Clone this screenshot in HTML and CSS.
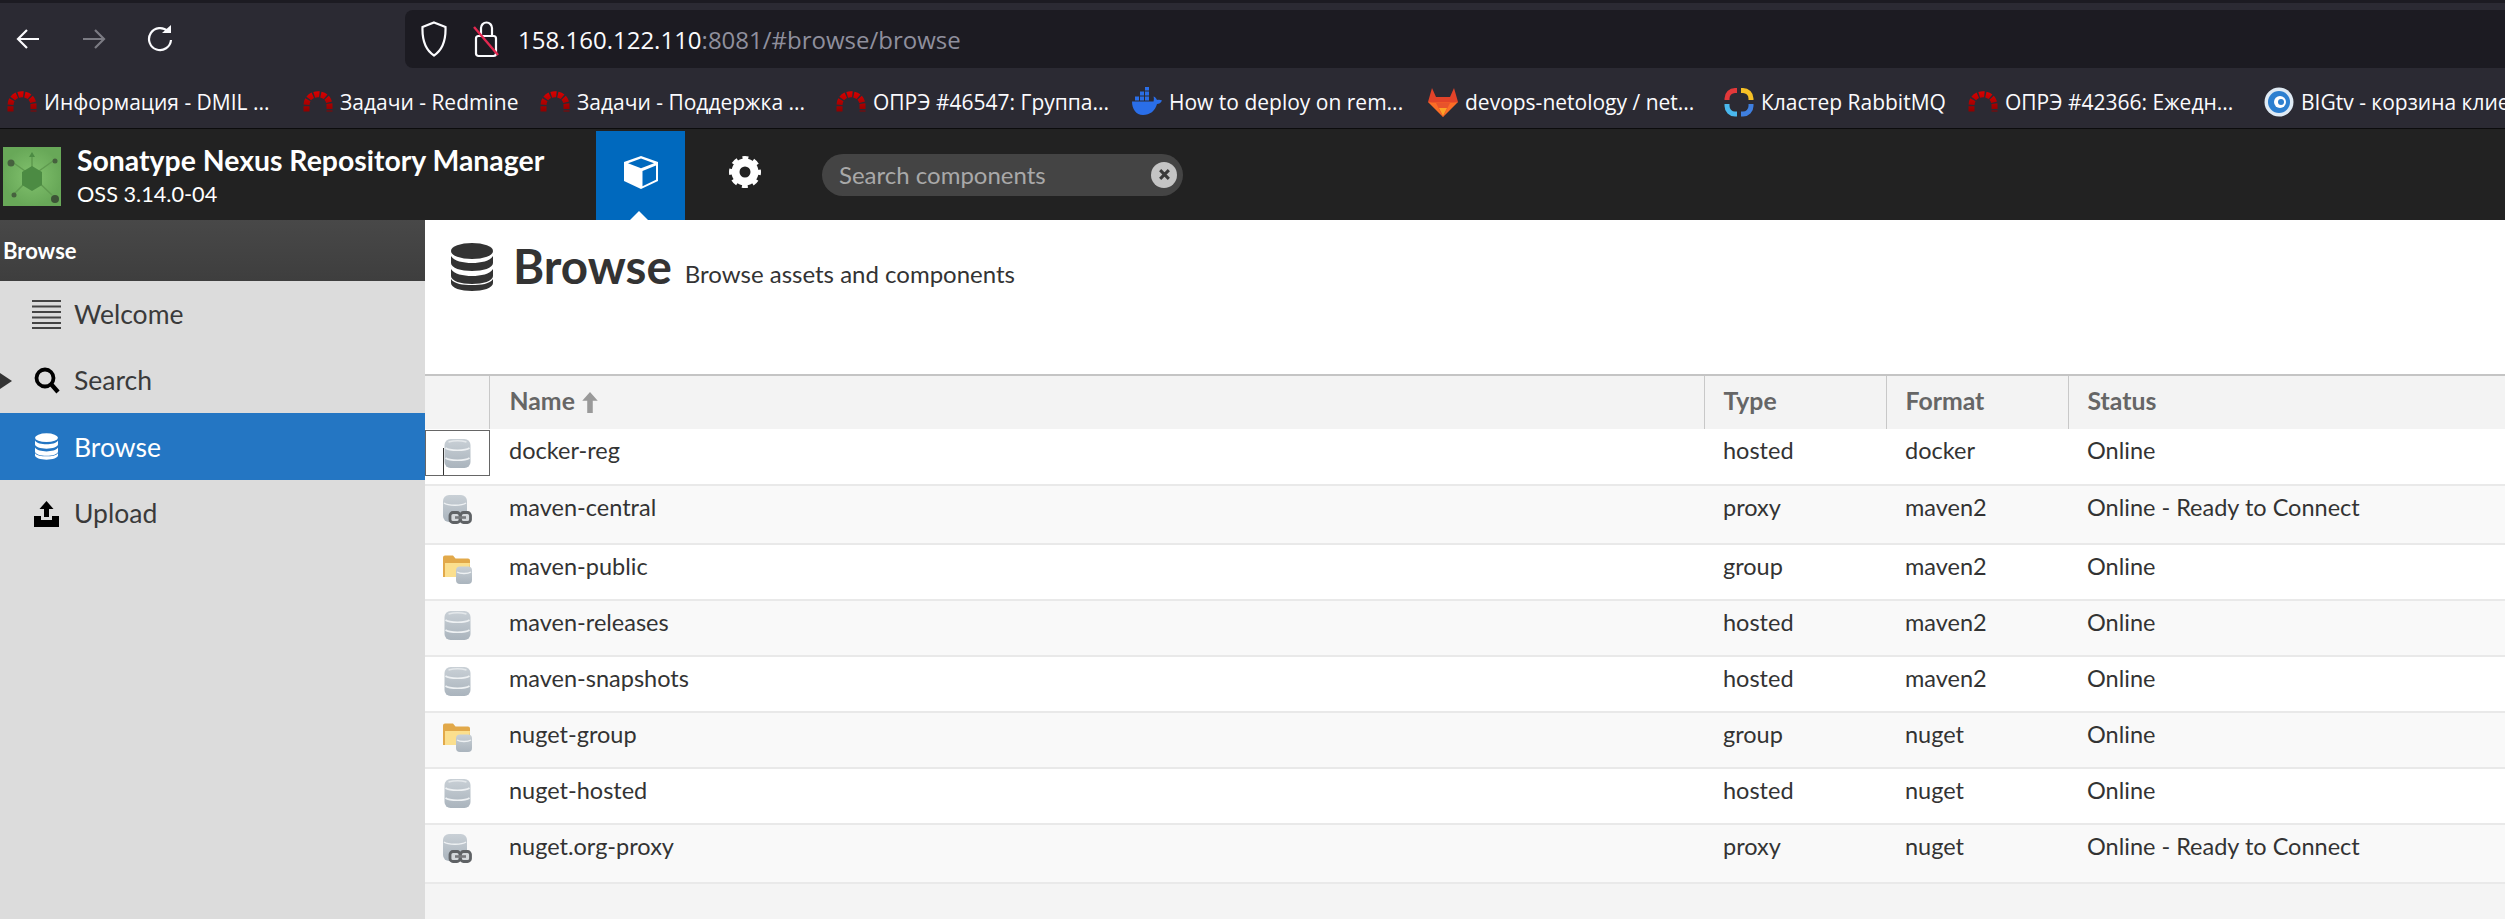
FILE: index.html
```html
<!DOCTYPE html>
<html lang="en">
<head>
  <meta charset="UTF-8">
  <meta name="viewport" content="width=device-width, initial-scale=1.0">
  <title>Browse - Nexus Repository Manager</title>
  <link rel="stylesheet" href="styles.css">
</head>
<body>

  <svg class="sprites" width="0" height="0">
    <defs>
      <linearGradient id="db-fill" x1="0" y1="0" x2="0" y2="1">
        <stop offset="0" stop-color="#c9d0d6"/>
        <stop offset="1" stop-color="#aab4bd"/>
      </linearGradient>
      <linearGradient id="redmine-fill" gradientUnits="userSpaceOnUse" x1="0" y1="6" x2="0" y2="28">
        <stop offset="0" stop-color="#e00000"/>
        <stop offset="1" stop-color="#8e0000"/>
      </linearGradient>
      <radialGradient id="logo-fill">
        <stop offset="0" stop-color="#82c26e"/>
        <stop offset="1" stop-color="#68a858"/>
      </radialGradient>
      <symbol id="redmine" viewBox="0 3.5 30 30">
        <path d="M3.500 28V22C3.500 7 26.500 7 26.500 22V28" fill="none" stroke="url(#redmine-fill)" stroke-width="6" stroke-dasharray="5.200 1.500"/>
      </symbol>
      <symbol id="stack" viewBox="0 0 42 48">
        <ellipse cx="21" cy="8" rx="21" ry="8" fill="currentColor"/>
        <path d="M0 13c3 5 12 7 21 7s18-2 21-7v7c0 5-10 8-21 8S0 25 0 20z" fill="currentColor"/>
        <path d="M0 26c3 5 12 7 21 7s18-2 21-7v7c0 5-10 8-21 8S0 38 0 33z" fill="currentColor"/>
        <path d="M0 36c3 5 12 6 21 6s18-1 21-6v4c0 5-10 8-21 8S0 45 0 40z" fill="currentColor"/>
      </symbol>
      <symbol id="repo-hosted" viewBox="0 0 26 29">
        <rect x="0" y="0" width="26" height="29" rx="6" fill="url(#db-fill)"/>
        <path d="M1 9c4 3 20 3 24 0M1 19c4 3 20 3 24 0" fill="none" stroke="#eef1f3" stroke-width="1.6"/>
        <path d="M4 3c5-1.500 13-1.500 18 0" fill="none" stroke="#e4e8eb" stroke-width="1.500"/>
      </symbol>
      <symbol id="repo-proxy" viewBox="0 0 29 29">
        <rect x="0" y="0" width="24" height="27" rx="6" fill="url(#db-fill)"/>
        <path d="M1 8c4 3 18 3 22 0" fill="none" stroke="#eef1f3" stroke-width="1.500"/>
        <rect x="7" y="17.500" width="10" height="10" rx="3" fill="#d4d8db" stroke="#5f6265" stroke-width="2.800"/>
        <rect x="17.500" y="17.500" width="10" height="10" rx="3" fill="#d4d8db" stroke="#5f6265" stroke-width="2.800"/>
        <path d="M12 22.500h11" stroke="#77797c" stroke-width="2.600"/>
      </symbol>
      <symbol id="repo-group" viewBox="0 0 29 29">
        <path d="M0 2.500a2 2 0 0 1 2-2h8l2.500 3H25a2 2 0 0 1 2 2V22H0z" fill="#e2a94a"/>
        <path d="M2 8h25l-1.500 14H2z" fill="#fbdf8e"/>
        <rect x="13" y="11.500" width="16" height="17.500" rx="4" fill="url(#db-fill)"/>
        <path d="M14 17c3 2 11 2 14 0" fill="none" stroke="#eef1f3" stroke-width="1.400"/>
      </symbol>
    </defs>
  </svg>

  <div class="window-strip"></div>

  <div class="toolbar">
    <div class="nav-buttons">
      <svg class="nav-icon" viewBox="0 0 26 26"><path d="M24 13H3M12 4l-9 9 9 9" fill="none" stroke="#fbfbfe" stroke-width="2.200"/></svg>
      <svg class="nav-icon" viewBox="0 0 26 26"><path d="M2 13h21M14 4l9 9-9 9" fill="none" stroke="#7b7b83" stroke-width="2.200"/></svg>
      <svg class="nav-icon" viewBox="0 0 26 30"><path d="M21 7.500A11 11 0 1 0 24 16" fill="none" stroke="#fbfbfe" stroke-width="2.200"/><path d="M15 9h9V1z" fill="#fbfbfe"/></svg>
    </div>
    <div class="url-bar">
      <svg class="shield" viewBox="0 0 26 36"><path d="M13 1.500 24.500 6c.5 14-3 23-11.500 28.500C4.500 29 1 20 1.500 6z" fill="none" stroke="#fbfbfe" stroke-width="2.200"/></svg>
      <svg class="lock" viewBox="0 0 26 38">
        <path d="M8 16V8a5.500 5.500 0 0 1 11 0v8" fill="none" stroke="#fbfbfe" stroke-width="2.200"/>
        <rect x="3" y="16" width="20" height="20" rx="2.500" fill="none" stroke="#fbfbfe" stroke-width="2.200"/>
        <path d="M1 7l24 28" stroke="#e22850" stroke-width="2.400"/>
      </svg>
      <span class="url-text">158.160.122.110<span class="url-rest">:8081/#browse/browse</span></span>
    </div>
  </div>

  <div class="bookmarks">
    <a class="bookmark"><svg class="favicon"><use href="#redmine"/></svg>Информация - DMIL ...</a>
    <a class="bookmark bookmark-mid"><svg class="favicon"><use href="#redmine"/></svg>Задачи - Redmine</a>
    <a class="bookmark"><svg class="favicon"><use href="#redmine"/></svg>Задачи - Поддержка ...</a>
    <a class="bookmark"><svg class="favicon"><use href="#redmine"/></svg>ОПРЭ #46547: Группа...</a>
    <a class="bookmark">
      <svg class="favicon" viewBox="0 0 30 30">
        <path d="M0 14.500h21.500c.5-2 .5-3.500 0-5 2 .5 3 2 3.500 3.500 1.500-.5 3.500-.5 5 .5-1 2.500-3 3.500-5 3.500C23 24 18 28 11 28 4 28 0 22 0 14.500z" fill="#2a6ee8"/>
        <path d="M3 9.500h4v4H3zM8 9.500h4v4H8zM13 9.500h4v4h-4zM8 4.500h4v4H8zM13 4.500h4v4h-4zM13-.5h4v4h-4z" fill="#2a6ee8"/>
      </svg>How to deploy on rem...</a>
    <a class="bookmark">
      <svg class="favicon" viewBox="0 0 30 30">
        <path d="M4 1l4 9h14l4-9 4 14-4 2H4l-4-2z" fill="#e24329"/>
        <path d="M0 15l15 15 15-15-4 .5H4z" fill="#fc6d26"/>
        <path d="M8 16h14l-7 14z" fill="#e8532b"/>
        <path d="M11 21h8l-4 8z" fill="#fca326"/>
      </svg>devops-netology / net...</a>
    <a class="bookmark bookmark-short">
      <svg class="favicon" viewBox="0 0 30 30">
        <path d="M13 3.500H11a8 8 0 0 0-8 8V13" fill="none" stroke="#e2383a" stroke-width="5"/>
        <path d="M17 3.500h2a8 8 0 0 1 8 8V13" fill="none" stroke="#f6c026" stroke-width="5"/>
        <path d="M27 17v2a8 8 0 0 1-8 8h-2" fill="none" stroke="#3f7fe0" stroke-width="5"/>
        <path d="M13 27h-2a8 8 0 0 1-8-8v-2" fill="none" stroke="#4ab8ee" stroke-width="5"/>
      </svg>Кластер RabbitMQ</a>
    <a class="bookmark"><svg class="favicon"><use href="#redmine"/></svg>ОПРЭ #42366: Ежедн...</a>
    <a class="bookmark">
      <svg class="favicon" viewBox="0 0 30 30">
        <circle cx="15" cy="15" r="14.500" fill="#dfeaf4"/>
        <circle cx="15" cy="15" r="11" fill="#2c7fd0"/>
        <circle cx="16" cy="15" r="6" fill="#fff"/>
        <circle cx="17" cy="15" r="3" fill="#2c7fd0"/>
      </svg>BIGtv - корзина клиента</a>
  </div>

  <header class="app-header">
    <div class="brand">
      <svg class="brand-logo" viewBox="0 0 58 59">
        <rect width="58" height="59" fill="url(#logo-fill)"/>
        <path d="M29 29 8 14M29 29l21-15M29 29 11 47M29 29l20 19M29 29V7" stroke="#5f9a4f" stroke-width="1.500"/>
        <path d="M29 19l10 6v13l-10 6-10-6V25z" fill="#4c8b43"/>
        <circle cx="8" cy="16" r="3.500" fill="#46613e"/>
        <circle cx="52" cy="14" r="2.500" fill="#46613e"/>
        <circle cx="11" cy="48" r="2.500" fill="#46613e"/>
        <circle cx="52" cy="52" r="4" fill="#3d5437"/>
        <path d="M29 5l3 5h-6z" fill="#4c8b43"/>
      </svg>
      <div class="brand-text">
        <div class="brand-title">Sonatype Nexus Repository Manager</div>
        <div class="brand-version">OSS 3.14.0-04</div>
      </div>
    </div>
    <nav class="mode-tabs">
      <a class="mode-tab mode-tab-active">
        <svg class="cube" viewBox="0 0 34 33">
          <path d="M17 0 34 6v19l-17 8-17-8V6z" fill="#fff"/>
          <path d="M17 2.600 30 7.200l-13 5-13-5z" fill="#0069be"/>
          <path d="M18.500 15 32 9.500v14.300l-13.500 6.400z" fill="#0069be"/>
        </svg>
      </a>
      <a class="mode-tab mode-tab-gear">
        <svg class="gear" viewBox="0 0 32 32">
          <circle cx="16" cy="16" r="9.500" fill="none" stroke="#fff" stroke-width="8"/>
          <circle cx="16" cy="16" r="13.500" fill="none" stroke="#fff" stroke-width="5" stroke-dasharray="5.600 5" stroke-dashoffset="2.800"/>
        </svg>
      </a>
    </nav>
    <div class="search-box">
      <span class="search-placeholder">Search components</span>
      <span class="search-clear">
        <svg viewBox="0 0 12 12"><path d="M2 2l8 8M10 2l-8 8" stroke="#3a3a3a" stroke-width="2.800"/></svg>
      </span>
    </div>
  </header>

  <div class="main">
    <aside class="sidebar">
      <div class="sidebar-title">Browse</div>
      <a class="nav-item">
        <svg class="nav-item-icon" viewBox="0 0 29 29"><path d="M0 1h29M0 6.500h29M0 12h29M0 17.500h29M0 23h29M0 28h29" stroke="#444" stroke-width="1.800"/></svg>
        Welcome
      </a>
      <a class="nav-item">
        <span class="nav-arrow"></span>
        <svg class="nav-item-icon" viewBox="0 0 29 29"><circle cx="13" cy="12" r="8.500" fill="none" stroke="#000" stroke-width="3.800"/><path d="M19 18l7 8" stroke="#000" stroke-width="4.400"/></svg>
        Search
      </a>
      <a class="nav-item nav-item-active">
        <svg class="nav-item-icon nav-item-stack"><use href="#stack"/></svg>
        Browse
      </a>
      <a class="nav-item">
        <svg class="nav-item-icon" viewBox="0 0 29 29"><path d="M14.500 2l7 8h-4.500v8h-5v-8H7.500zM2 17h7v4h11v-4h7v11H2z" fill="#000"/></svg>
        Upload
      </a>
    </aside>

    <section class="content">
      <div class="page-head">
        <svg class="page-icon"><use href="#stack"/></svg>
        <h1 class="page-title">Browse</h1>
        <span class="page-sub">Browse assets and components</span>
      </div>

      <table class="repo-table">
        <colgroup>
          <col class="col-icon"><col class="col-name"><col class="col-type"><col class="col-format"><col>
        </colgroup>
        <thead>
          <tr>
            <th></th>
            <th class="name-head">Name <span class="sort-arrow">
              <svg viewBox="0 0 16 19"><path d="M8 0l7 8h-4.500v11h-5V8H1z" fill="#999"/></svg>
            </span></th>
            <th>Type</th>
            <th>Format</th>
            <th>Status</th>
          </tr>
        </thead>
        <tbody>
          <tr>
            <td class="icon-cell icon-cell-focus"><svg class="repo-icon"><use href="#repo-hosted"/></svg></td>
            <td class="name-cell">docker-reg</td><td>hosted</td><td>docker</td><td>Online</td>
          </tr>
          <tr class="row-tall">
            <td class="icon-cell"><svg class="repo-icon"><use href="#repo-proxy"/></svg></td>
            <td class="name-cell">maven-central</td><td>proxy</td><td>maven2</td><td>Online - Ready to Connect</td>
          </tr>
          <tr>
            <td class="icon-cell"><svg class="repo-icon"><use href="#repo-group"/></svg></td>
            <td class="name-cell">maven-public</td><td>group</td><td>maven2</td><td>Online</td>
          </tr>
          <tr>
            <td class="icon-cell"><svg class="repo-icon"><use href="#repo-hosted"/></svg></td>
            <td class="name-cell">maven-releases</td><td>hosted</td><td>maven2</td><td>Online</td>
          </tr>
          <tr>
            <td class="icon-cell"><svg class="repo-icon"><use href="#repo-hosted"/></svg></td>
            <td class="name-cell">maven-snapshots</td><td>hosted</td><td>maven2</td><td>Online</td>
          </tr>
          <tr>
            <td class="icon-cell"><svg class="repo-icon"><use href="#repo-group"/></svg></td>
            <td class="name-cell">nuget-group</td><td>group</td><td>nuget</td><td>Online</td>
          </tr>
          <tr>
            <td class="icon-cell"><svg class="repo-icon"><use href="#repo-hosted"/></svg></td>
            <td class="name-cell">nuget-hosted</td><td>hosted</td><td>nuget</td><td>Online</td>
          </tr>
          <tr class="row-tall">
            <td class="icon-cell"><svg class="repo-icon"><use href="#repo-proxy"/></svg></td>
            <td class="name-cell">nuget.org-proxy</td><td>proxy</td><td>nuget</td><td>Online - Ready to Connect</td>
          </tr>
        </tbody>
      </table>
    </section>
  </div>

</body>
</html>
```

FILE: styles.css
```css
html,
body {
  height: 100%;
}

body {
  margin: 0;
  display: flex;
  flex-direction: column;
  overflow: hidden;
  background-color: #2b2a33;
  font-family: "Lato", "Liberation Sans", sans-serif;
}

.sprites {
  position: absolute;
}

.window-strip {
  height: 3px;
  background-color: #1c1b22;
}

/* browser chrome */
.toolbar {
  display: flex;
  height: 65px;
  padding-top: 7px;
  box-sizing: border-box;
  background-color: #2b2a33;
}

.nav-buttons {
  display: flex;
  align-items: center;
  gap: 40px;
  width: 405px;
  padding-left: 15px;
  box-sizing: border-box;
}

.nav-icon {
  width: 26px;
  height: 30px;
}

.url-bar {
  flex: 1;
  display: flex;
  align-items: center;
  padding-left: 16px;
  background-color: #1c1b22;
  border-radius: 8px 0 0 8px;
}

.shield {
  width: 26px;
  height: 36px;
}

.lock {
  width: 26px;
  height: 38px;
  margin-left: 26px;
}

.url-text {
  margin-left: 19px;
  font-family: "Open Sans", "Liberation Sans", sans-serif;
  font-size: 24px;
  color: #fbfbfe;
}

.url-rest {
  color: #8f8f9d;
}

.bookmarks {
  display: flex;
  align-items: center;
  height: 53px;
  padding: 7px 0 0 7px;
  overflow: hidden;
  border-bottom: 1px solid #0c0c0d;
  flex: none;
  white-space: nowrap;
  font-family: "Open Sans", "Liberation Sans", sans-serif;
  font-size: 21px;
  color: #fbfbfe;
}

.bookmark {
  flex: 0 0 296px;
  display: flex;
  align-items: center;
}

.bookmark-mid {
  flex-basis: 237px;
}

.bookmark-short {
  flex-basis: 244px;
}

.favicon {
  width: 30px;
  height: 30px;
  margin-right: 7px;
  flex: none;
}

/* nexus header */
.app-header {
  display: flex;
  align-items: center;
  height: 91px;
  flex: none;
  background-color: #222;
}

.brand {
  display: flex;
  align-items: center;
  width: 596px;
  padding-left: 3px;
  box-sizing: border-box;
}

.brand-logo {
  width: 58px;
  height: 59px;
  margin-top: 4px;
}

.brand-text {
  margin-left: 16px;
  color: #fff;
}

.brand-title {
  font-size: 28.4px;
  font-weight: 700;
  line-height: 32px;
}

.brand-version {
  margin-top: 6px;
  font-size: 21.7px;
  line-height: 24px;
}

.mode-tabs {
  display: flex;
  align-self: stretch;
}

.mode-tab {
  display: flex;
  align-items: center;
  justify-content: center;
  width: 89px;
  margin-top: 2px;
  position: relative;
}

.mode-tab-active {
  background-color: #0069be;
}

.mode-tab-gear {
  margin-left: 15px;
}

/* little notch pointing at the page below */
.mode-tab-active::after {
  content: "";
  position: absolute;
  left: 34px;
  bottom: 0;
  border-left: 9px solid transparent;
  border-right: 9px solid transparent;
  border-bottom: 9px solid #fff;
}

.cube {
  width: 34px;
  height: 33px;
  margin-bottom: 6px;
}

.gear {
  width: 32px;
  height: 32px;
  margin-bottom: 7px;
}

.search-box {
  display: flex;
  align-items: center;
  justify-content: space-between;
  width: 361px;
  height: 42px;
  margin-left: 33px;
  padding: 0 6px 0 17px;
  box-sizing: border-box;
  background-color: #444;
  border-radius: 21px;
}

.search-placeholder {
  font-size: 24px;
  color: #a9a9a9;
}

.search-clear {
  display: flex;
  align-items: center;
  justify-content: center;
  width: 26px;
  height: 26px;
  background-color: #c4c4c4;
  border-radius: 50%;
}

.search-clear svg {
  width: 13px;
  height: 13px;
}

/* page */
.main {
  flex: 1;
  display: flex;
  min-height: 0;
}

.sidebar {
  flex: 0 0 425px;
  background-color: #dcdcdc;
}

.sidebar-title {
  height: 61px;
  padding-left: 3px;
  line-height: 61px;
  background: linear-gradient(#484848, #3e3e3e);
  font-size: 22px;
  font-weight: 700;
  color: #fff;
}

.nav-item {
  display: flex;
  align-items: center;
  height: 66px;
  padding-left: 32px;
  position: relative;
  font-size: 26.5px;
  color: #3a3a3a;
}

.nav-item-active {
  height: 67px;
  background-color: #2476c3;
  color: #fff;
}

.nav-item-icon {
  width: 29px;
  height: 29px;
  margin-right: 13px;
  flex: none;
}

.nav-item-stack {
  width: 23px;
  padding: 0 3px;
  color: #fff;
}

.nav-arrow {
  position: absolute;
  left: 0;
  top: 26px;
  border-top: 8px solid transparent;
  border-bottom: 8px solid transparent;
  border-left: 12px solid #333;
}

.content {
  flex: 1;
  display: flex;
  flex-direction: column;
  background-color: #f4f4f4;
  min-width: 0;
}

.page-head {
  display: flex;
  align-items: flex-start;
  height: 154px;
  padding: 23px 0 0 26px;
  box-sizing: border-box;
  background-color: #fff;
  color: #333;
}

.page-icon {
  width: 42px;
  height: 48px;
  flex: none;
}

.page-title {
  margin: -7px 0 0 20px;
  font-size: 47.5px;
  line-height: 60px;
  font-weight: 700;
}

.page-sub {
  margin: 18px 0 0 13px;
  font-size: 24px;
  line-height: 26px;
}

.repo-table {
  width: 100%;
  table-layout: fixed;
  border-collapse: collapse;
  font-size: 23.5px;
  color: #333;
}

.col-icon {
  width: 64px;
}

.col-name {
  width: 1215px;
}

.col-type,
.col-format {
  width: 182px;
}

.repo-table th {
  height: 54px;
  padding: 0 0 4px 19px;
  box-sizing: border-box;
  border-top: 2px solid #c4c4c4;
  border-left: 1px solid #c8c8c8;
  background-color: #f3f3f3;
  text-align: left;
  font-size: 24.8px;
  font-weight: 700;
  color: #666;
}

.repo-table th:first-child {
  border-left: none;
}

.repo-table .name-head,
.repo-table .name-cell {
  padding-left: 20px;
}

.sort-arrow svg {
  width: 18px;
  height: 21px;
  vertical-align: -3px;
}

.repo-table td {
  height: 56px;
  padding: 9px 0 0 19px;
  box-sizing: border-box;
  vertical-align: top;
  line-height: 24px;
  border-bottom: 2px solid #e9e9e9;
  background-color: #fff;
}

.repo-table tbody tr:nth-child(even) td {
  background-color: #f9f9f9;
}

.repo-table .row-tall td {
  height: 59px;
  padding-top: 9px;
}

.repo-table .icon-cell {
  padding: 10px 0 0 18px;
  position: relative;
}

.repo-icon {
  display: block;
  width: 29px;
  height: 29px;
}

/* keyboard focus marker on the first cell */
.icon-cell-focus::before {
  content: "";
  position: absolute;
  left: 0;
  top: 1px;
  width: 63px;
  height: 44px;
  border: 1px solid #666;
}

.icon-cell-focus::after {
  content: "";
  position: absolute;
  left: 18px;
  top: 19px;
  height: 27px;
  border-left: 1px solid #333;
}
```
